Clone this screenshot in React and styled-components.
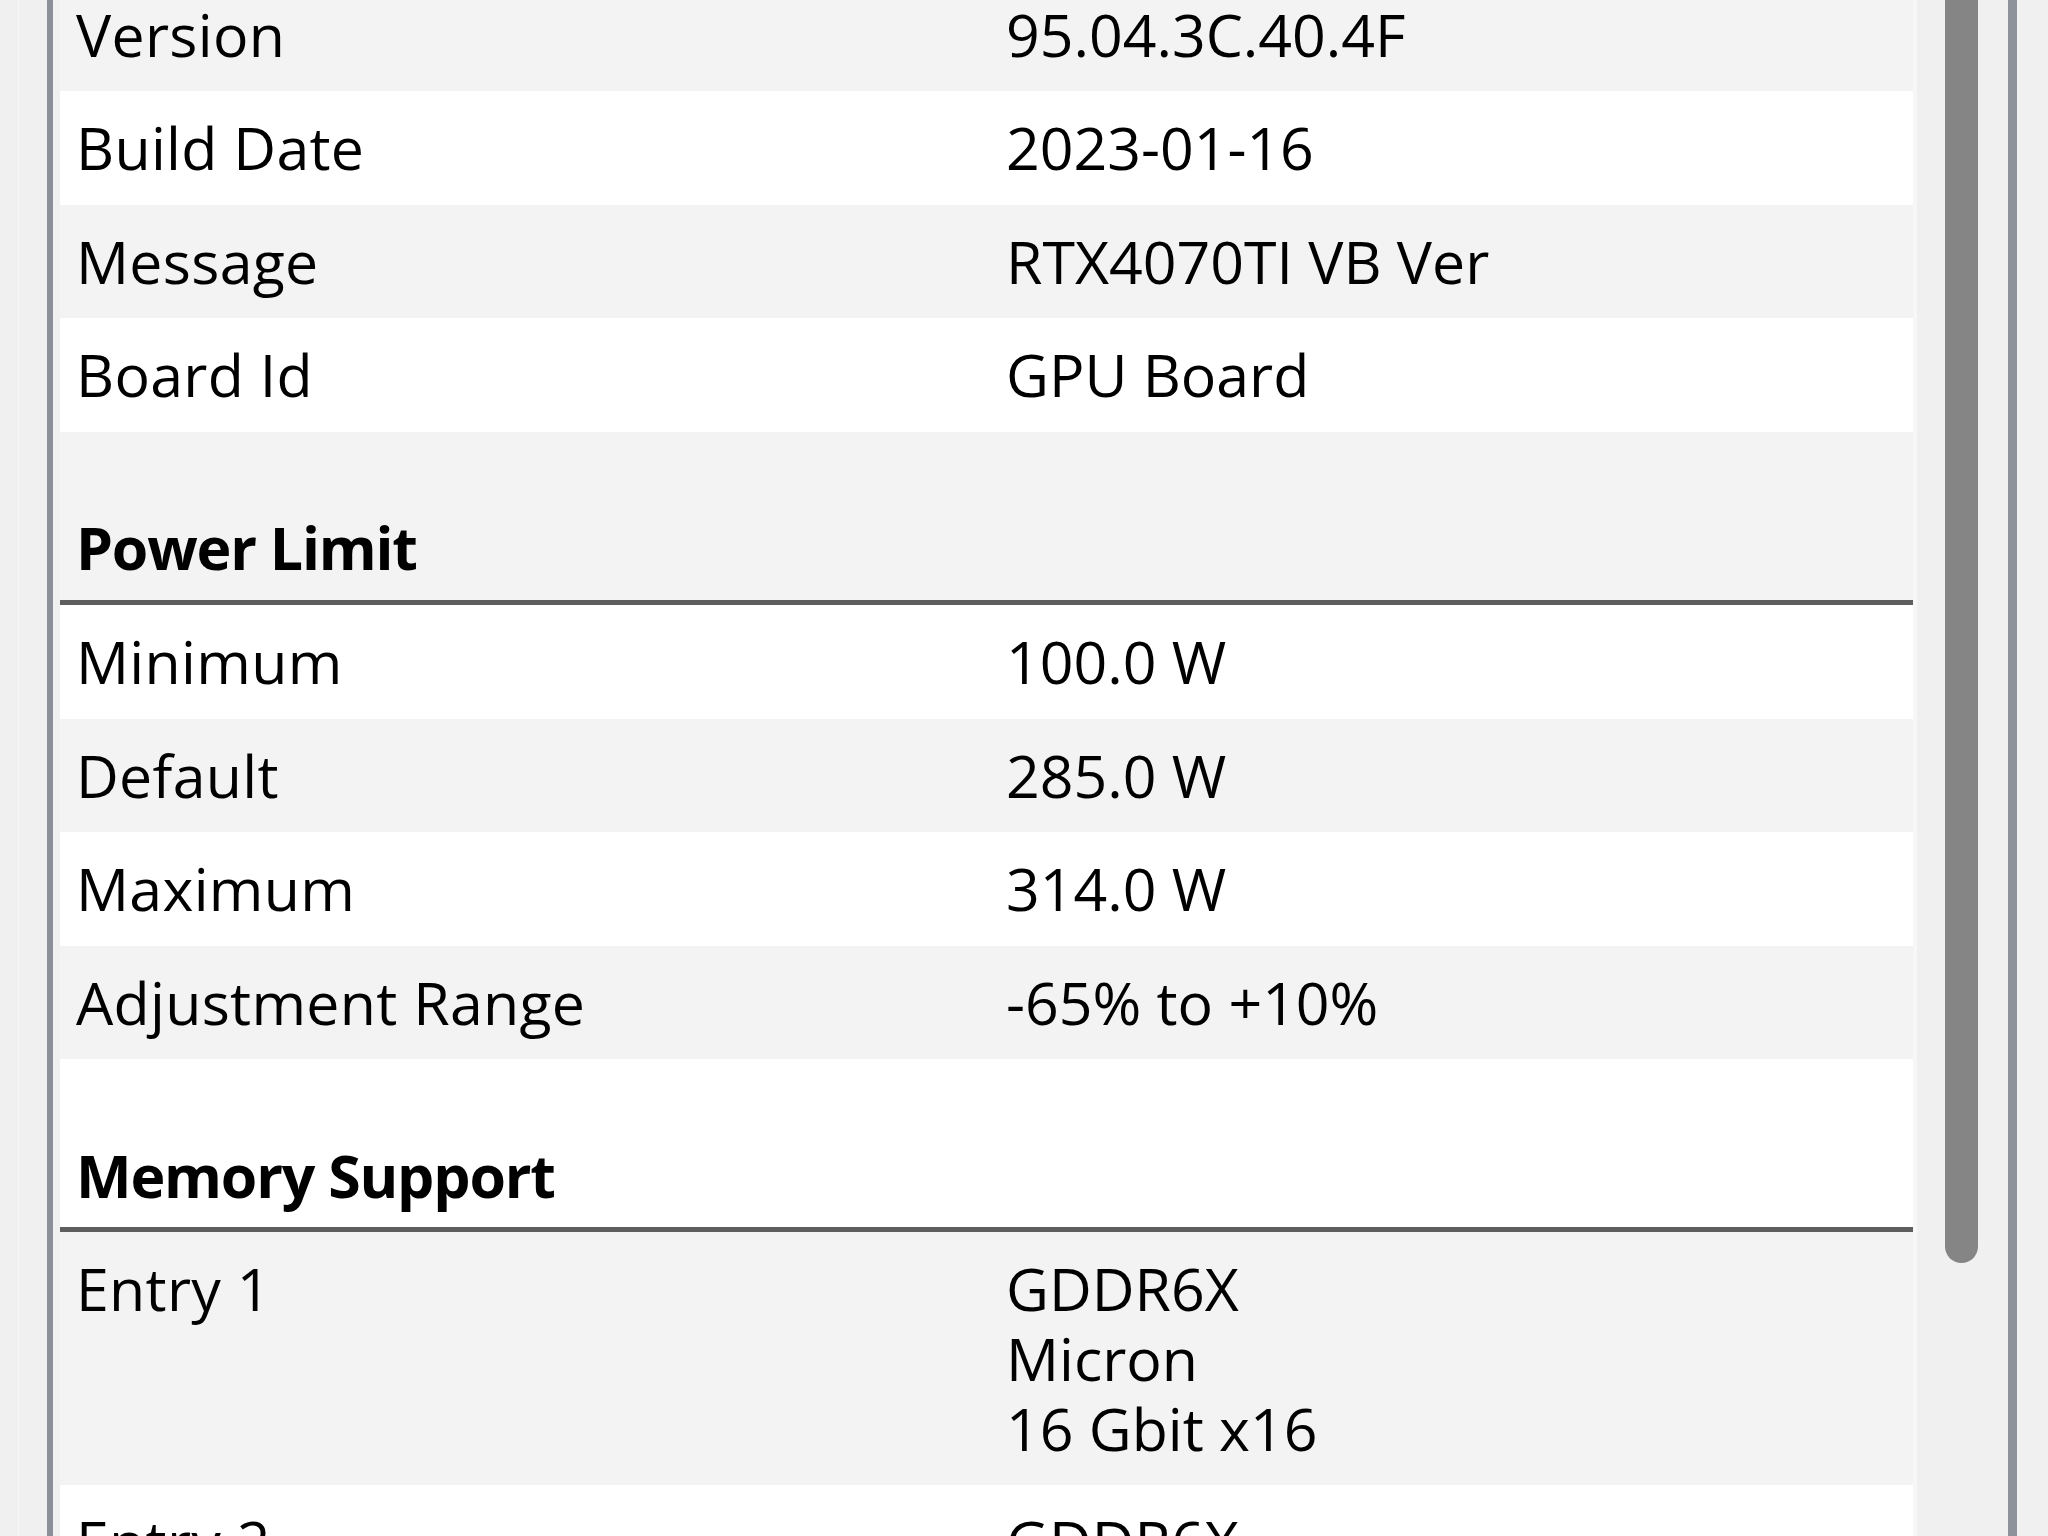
import styled, { createGlobalStyle } from "styled-components";

const GlobalStyle = createGlobalStyle`
  html, body, #root {
    margin: 0;
    height: 100%;
    overflow: hidden;
  }
  body {
    background: #f0f0f0;
    font-family: "Open Sans", "Noto Sans", sans-serif;
    color: #000;
  }
`;

const Window = styled.div`
  display: flex;
  height: 1536px;
  background: #f0f0f0;
`;

const Gutter = styled.div`
  width: ${(p) => p.w}px;
  flex-shrink: 0;
  box-shadow: ${(p) => (p.edge ? "inset -28px 0 0 #f0f0f0, inset -29px 0 0 #f8f8f8" : "none")};
`;

const Frame = styled.div`
  flex: 1;
  display: flex;
  min-width: 0;
  border-left: 6px solid #8a8f98;
  border-right: 9px solid #8d929b;
  padding-left: 7px;
`;

const Viewport = styled.div`
  flex: 1;
  min-width: 0;
  overflow: hidden;
`;

const List = styled.div`
  margin-top: -22.4px;
  font-size: 59px;
  line-height: 69.6px;
`;

const Row = styled.div`
  display: grid;
  grid-template-columns: 914px 1fr;
  padding: 22px 16px;
  background: ${(p) => (p.alt ? "#f3f3f3" : "#ffffff")};
`;

const Label = styled.div`
  white-space: nowrap;
  letter-spacing: 0.3px;
`;

const Value = styled.div`
  padding-left: 16px;
  white-space: nowrap;
`;

const SectionHead = styled.div`
  box-sizing: content-box;
  height: 151px;
  display: flex;
  align-items: flex-end;
  padding: 0 16px 17px;
  font-weight: 700;
  letter-spacing: -1.2px;
  background: ${(p) => (p.alt ? "#f3f3f3" : "#ffffff")};
  border-bottom: 5px solid #5e5e5e;
`;

const Track = styled.div`
  width: 95px;
  flex-shrink: 0;
  background: #f0f0f0;
  display: flex;
  flex-direction: column;
  align-items: center;
  box-shadow: inset 4px 0 0 #f7f7f7;
`;

const Thumb = styled.div`
  width: 33px;
  height: 1300px;
  margin-top: -37px;
  margin-left: 2px;
  border-radius: 16.5px;
  background: #858585;
`;

const sections = [
  {
    rows: [
      ["Version", ["95.04.3C.40.4F"]],
      ["Build Date", ["2023-01-16"]],
      ["Message", ["RTX4070TI VB Ver"]],
      ["Board Id", ["GPU Board"]],
    ],
  },
  {
    title: "Power Limit",
    rows: [
      ["Minimum", ["100.0 W"]],
      ["Default", ["285.0 W"]],
      ["Maximum", ["314.0 W"]],
      ["Adjustment Range", ["-65% to +10%"]],
    ],
  },
  {
    title: "Memory Support",
    rows: [
      ["Entry 1", ["GDDR6X", "Micron", "16 Gbit x16"]],
      ["Entry 2", ["GDDR6X", "Samsung", "16 Gbit x16"]],
    ],
  },
];

function App() {
  let index = 0;
  const items = [];
  sections.forEach((section, s) => {
    if (section.title) {
      items.push(
        <SectionHead key={`h${s}`} alt={index % 2 === 0}>
          {section.title}
        </SectionHead>
      );
      index++;
    }
    section.rows.forEach(([label, lines]) => {
      items.push(
        <Row key={label} alt={index % 2 === 0}>
          <Label>{label}</Label>
          <Value>
            {lines.map((line) => (
              <div key={line}>{line}</div>
            ))}
          </Value>
        </Row>
      );
      index++;
    });
  });

  return (
    <>
      <GlobalStyle />
      <Window>
        <Gutter w={47} edge />
        <Frame>
          <Viewport>
            <List>{items}</List>
          </Viewport>
          <Track>
            <Thumb />
          </Track>
        </Frame>
        <Gutter w={31} />
      </Window>
    </>
  );
}

export default App;
